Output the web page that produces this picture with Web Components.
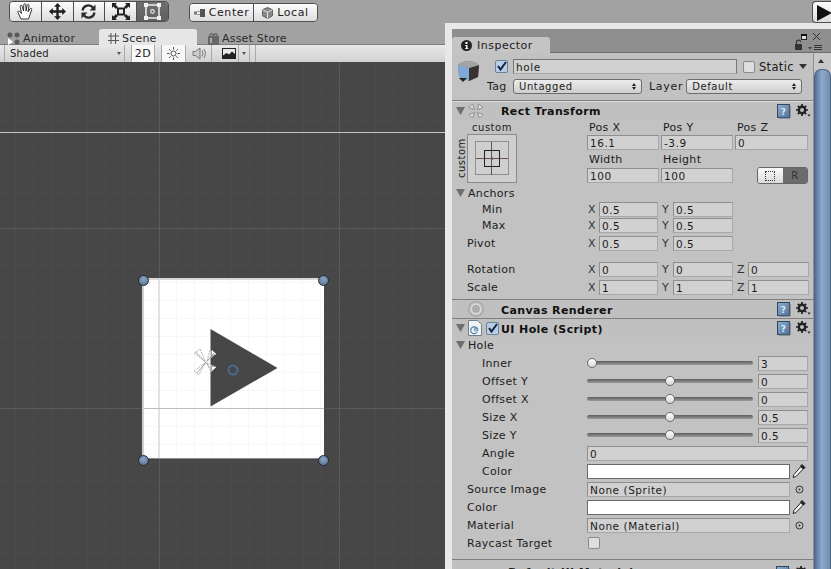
<!DOCTYPE html>
<html>
<head>
<meta charset="utf-8">
<title>Inspector</title>
<style>
html, body { margin: 0; height: 100%; overflow: hidden; background: #a2a2a2; }
body { font: 11px "DejaVu Sans", sans-serif; color: #1c1c1c; }
svg { display: block; }
</style>
</head>
<body>
<unity-editor></unity-editor>
<script>
// shared bits of css for the inspector fields
const fieldCss = `
    .field {
        box-sizing: border-box;
        height: 15px;
        background: #d1d1d1;
        border: 1px solid #8e8e8e;
        border-bottom-color: #a8a8a8;
        border-right-color: #a8a8a8;
        padding-left: 2px;
        font-size: 10.5px;
        line-height: 14px;
        letter-spacing: .55px;
        color: #1c1c1c;
        white-space: nowrap;
        overflow: hidden;
    }
    .label { letter-spacing: .32px; white-space: nowrap; }
`;

const icons = {
    help: `<svg width="14" height="15" viewBox="0 0 14 15"><defs><linearGradient id="hb" x1="0" y1="0" x2="1" y2="1"><stop offset="0" stop-color="#8fb0d0"/><stop offset="1" stop-color="#4f7199"/></linearGradient></defs><rect x=".5" y=".5" width="12" height="13" fill="url(#hb)" stroke="#2f4560"/><path d="M13 2v12H2" fill="none" stroke="#5a6a7c"/><text x="6.500" y="10.500" font-size="9" font-family="DejaVu Sans" text-anchor="middle" fill="#dfe9f3">?</text></svg>`,
    gear: `<svg width="15" height="14" viewBox="0 0 15 14"><circle cx="6" cy="6" r="3.200" fill="none" stroke="#222" stroke-width="2.400"/><path d="M6 0v2.500M6 9.500V12M0 6h2.500M9.500 6H12M1.800 1.800l1.800 1.800M8.400 8.400l1.800 1.800M10.200 1.800L8.400 3.600M3.600 8.400l-1.800 1.800" stroke="#222" stroke-width="1.700"/><path d="M11.500 10.500h3l-1.500 2.200z" fill="#222"/></svg>`,
    rect: `<svg width="16" height="16" viewBox="0 0 16 16" fill="#e4e4e4" stroke="#8f8f8f"><path d="M6.500 6.500L1 4.500 4.500 1zM9.500 6.500L11 1l4 3.500zM6.500 9.500L1 11.500 4.500 15zM9.500 9.500l5.500 2-3.500 3.500z"/></svg>`,
    canvas: `<svg width="16" height="16" viewBox="0 0 16 16" fill="none"><circle cx="8" cy="8" r="7.300" stroke="#9c9c9c"/><circle cx="8" cy="8" r="5" stroke="#d6d6d6" stroke-width="1.400"/><circle cx="8" cy="8" r="3" stroke="#9a9a9a"/><circle cx="8" cy="8" r="1.500" fill="#a4a4a4"/></svg>`,
    script: `<svg width="14" height="16" viewBox="0 0 14 16"><path d="M.5.5h9l4 4v11H.5z" fill="#f2f2f2" stroke="#6e7f90"/><path d="M9 8.500A3.400 3.400 0 1 0 9 12" fill="none" stroke="#4a7fb0" stroke-width="1.200"/><path d="M7 7.500v4M9.500 7.500v4M6 8.800h4.500M6 10.300h4.500" stroke="#4a7fb0" stroke-width=".7"/></svg>`,
    dropper: `<svg width="15" height="16" viewBox="0 0 15 16"><path d="M10 1.500l3 3-1.500 1.500-3-3z" fill="#222" stroke="#222"/><path d="M8.700 3.800l2.400 2.400-7.200 7.400-2.800.9.800-2.900z" fill="#f6f6f6" stroke="#222"/></svg>`,
    target: `<svg width="9" height="9" viewBox="0 0 9 9"><circle cx="4.500" cy="4.500" r="3.500" fill="none" stroke="#333"/><circle cx="4.500" cy="4.500" r="1" fill="#333"/></svg>`,
    fold: `<svg width="9" height="8" viewBox="0 0 9 8"><path d="M0 0h9L4.500 8z" fill="#6e6e6e"/></svg>`,
    check: `<svg width="11" height="11" viewBox="0 0 11 11"><path d="M2 5l2.500 3.500L10 1" fill="none" stroke="#10243c" stroke-width="2"/></svg>`
};

// buttons in the main toolbar
class ToolButton extends HTMLElement {
    constructor() {
        super();
        this.attachShadow({ mode: 'open' });
    }
    connectedCallback() {
        this.shadowRoot.innerHTML = `
            <style>
                :host {
                    display: flex; align-items: center; justify-content: center; gap: 4px;
                    box-sizing: border-box;
                    height: 100%;
                    flex: 1;
                    background: linear-gradient(#fdfdfd, #dcdcdc);
                    border-right: 1px solid #4f4f4f;
                    font-size: 11px;
                    letter-spacing: .6px;
                    color: #222;
                }
                :host(:last-child) { border-right: 0; }
                :host([active]) { background: linear-gradient(#6f6f6f, #5f5f5f); }
            </style>
            <slot></slot>
        `;
    }
}
customElements.define('tool-button', ToolButton);

class MainToolbar extends HTMLElement {
    constructor() {
        super();
        this.attachShadow({ mode: 'open' });
    }
    connectedCallback() {
        this.shadowRoot.innerHTML = `
            <style>
                :host {
                    grid-column: 1 / 3;
                    display: flex;
                    height: 23px;
                    padding-left: 9px;
                    background: #a2a2a2;
                }
                .group {
                    display: flex;
                    box-sizing: border-box;
                    border: 1px solid #4f4f4f;
                    border-radius: 4px;
                    overflow: hidden;
                }
                .tools { width: 160px; height: 21px; margin-top: 1px; }
                .pivot { width: 129px; height: 19px; margin: 3px 0 0 20px; }
                .play {
                    margin: 1px 0 0 auto;
                    width: 19px; height: 22px;
                    box-sizing: border-box;
                    border: 1px solid #4f4f4f; border-right: 0;
                    border-radius: 4px 0 0 4px;
                    background: linear-gradient(#fdfdfd, #dcdcdc);
                    padding: 3px 0 0 4px;
                }
            </style>
            <div class="group tools">
                <tool-button><svg width="16" height="17" viewBox="0 0 16 17"><path d="M4 16L1 9.500c-.5-1.300 1-2 1.800-1L4.500 10.500 3.200 3.500c-.2-1.400 1.700-1.700 2-.3L6.500 8 6.800 1.700c.1-1.300 1.900-1.300 2 0L9 8l1.200-5.700c.3-1.300 2-1 1.800.3L11 8.800l2-3c.8-1 2.200-.2 1.700 1L12.500 13l-1 3z" fill="#fff" stroke="#222" stroke-width=".9"/></svg></tool-button>
                <tool-button><svg width="17" height="17" viewBox="0 0 17 17"><path d="M8.500 0L12 3.800H9.700v3.500h3.500V5L17 8.500 13.200 12V9.700H9.700v3.500H12L8.500 17 5 13.200h2.300V9.700H3.800V12L0 8.500 3.800 5v2.300h3.500V3.800H5z" fill="#1e1e1e"/></svg></tool-button>
                <tool-button><svg width="15" height="15" viewBox="0 0 15 15" fill="none" stroke="#2a2a2a" stroke-width="2.200"><path d="M1.500 6.500A6 6 0 0 1 12 3.500"/><path d="M13.500 8.500A6 6 0 0 1 3 11.500"/><path d="M14.500 .5v6h-6z" fill="#2a2a2a" stroke="none"/><path d="M.5 14.500v-6h6z" fill="#2a2a2a" stroke="none"/></svg></tool-button>
                <tool-button><svg width="18" height="17" viewBox="0 0 18 17"><rect x="6" y="5.500" width="6" height="6" fill="none" stroke="#222" stroke-width="2"/><path d="M0 0h5L3.500 1.500 6 4 4 6 1.500 3.500 0 5zM18 0h-5l1.500 1.500L12 4l2 2 2.500-2.500L18 5zM0 17h5l-1.500-1.500L6 13l-2-2-2.500 2.500L0 12zM18 17h-5l1.500-1.500L12 13l2-2 2.500 2.500L18 12z" fill="#222"/></svg></tool-button>
                <tool-button active><svg width="17" height="17" viewBox="0 0 17 17"><rect x="2" y="2" width="13" height="13" fill="none" stroke="#e8e8e8" stroke-width="1.600"/><path d="M0 0h4v4H0zM13 0h4v4h-4zM0 13h4v4H0zM13 13h4v4h-4z" fill="#f2f2f2"/><circle cx="8.500" cy="8.500" r="1.800" fill="none" stroke="#e8e8e8" stroke-width="1.200"/></svg></tool-button>
            </div>
            <div class="group pivot">
                <tool-button><svg width="11" height="8" viewBox="0 0 11 8"><path d="M0 2.500h3v3H0z" fill="#777"/><path d="M3 2.500h3M3 5.500h3" stroke="#999"/><path d="M6 0h5v8H6z" fill="#555"/></svg>Center</tool-button>
                <tool-button><svg width="11" height="12" viewBox="0 0 12 12"><path d="M6 0l5.500 2.500v6.500L6 12 .5 9V2.500z" fill="#888" stroke="#555"/><path d="M.5 2.500L6 5.200l5.500-2.700M6 5.200V12" stroke="#eee" fill="none"/></svg>Local</tool-button>
            </div>
            <div class="play"><svg width="15" height="16" viewBox="0 0 15 16"><path d="M0 0l15 8-15 8z" fill="#111"/></svg></div>
        `;
    }
}
customElements.define('main-toolbar', MainToolbar);

class SceneTabs extends HTMLElement {
    constructor() {
        super();
        this.attachShadow({ mode: 'open' });
    }
    connectedCallback() {
        this.shadowRoot.innerHTML = `
            <style>
                :host {
                    display: flex;
                    height: 22px;
                    box-sizing: border-box;
                    padding-top: 6px;
                    padding-left: 7px;
                    background: #a2a2a2;
                    border-bottom: 1px solid #7c7c7c;
                    letter-spacing: .2px;
                    color: #2a2a2a;
                }
                .tab { display: flex; align-items: center; gap: 3px; padding-top: 3px; box-sizing: border-box; height: 16px; }
                .animator { width: 92px; }
                .scene {
                    width: 98px;
                    padding-left: 9px;
                    background: #e6e6e6;
                    border-radius: 3px 3px 0 0;
                }
                .store { margin-left: 11px; }
            </style>
            <div class="tab animator"><svg width="13" height="13" viewBox="0 0 13 13"><circle cx="3" cy="3" r="2.500" fill="#5a5a5a"/><circle cx="10" cy="3" r="2.500" fill="#5a5a5a"/><circle cx="10" cy="10" r="2.500" fill="#5a5a5a"/><path d="M1 6l5 4-5 3z" fill="#fff"/></svg>Animator</div>
            <div class="tab scene"><svg width="11" height="11" viewBox="0 0 11 11"><path d="M3 0v11M7.500 0v11M0 3h11M0 7.500h11" stroke="#555"/></svg>Scene</div>
            <div class="tab store"><svg width="11" height="12" viewBox="0 0 11 12"><path d="M0 3h11v9H0z" fill="#666"/><path d="M2 3V1h3v2M6 3V1h3v2" fill="none" stroke="#555"/><path d="M2 5h2v5H2z" fill="#aaa"/></svg>Asset Store</div>
        `;
    }
}
customElements.define('scene-tabs', SceneTabs);

class SceneToolbar extends HTMLElement {
    constructor() {
        super();
        this.attachShadow({ mode: 'open' });
    }
    connectedCallback() {
        this.shadowRoot.innerHTML = `
            <style>
                :host {
                    display: flex;
                    align-items: stretch;
                    height: 17px;
                    background: linear-gradient(#e8e8e8, #d2d2d2);
                    font-size: 10px;
                    letter-spacing: .2px;
                    color: #222;
                }
                .edge { width: 4px; border-right: 1px solid #aaa; }
                .shaded {
                    display: flex; align-items: center; justify-content: space-between;
                    box-sizing: border-box;
                    width: 120px;
                    padding: 0 3px 0 5px;
                    border-right: 1px solid #aaa;
                }
                .arrow { width: 0; height: 0; border: 2.500px solid transparent; border-top: 3px solid #555; border-bottom: 0; }
                .btn { display: flex; align-items: center; justify-content: center; box-sizing: border-box; border-right: 1px solid #aaa; }
                .two { width: 24px; margin-left: 6px; background: #f8f8f8; border-left: 1px solid #aaa; font-size: 11px; letter-spacing: .5px; }
                .sun { width: 25px; margin-left: 6px; background: #f8f8f8; border-left: 1px solid #aaa; }
                .sound { width: 26px; }
                .image { margin-left: 8px; width: 18px; border: 0; }
                .more { width: 12px; border-left: 1px solid #aaa; }
            </style>
            <div class="edge"></div>
            <div class="shaded">Shaded<span class="arrow"></span></div>
            <div class="btn two">2D</div>
            <div class="btn sun"><svg width="13" height="13" viewBox="0 0 13 13" stroke="#555" fill="none"><circle cx="6.500" cy="6.500" r="2.500"/><path d="M6.500 0v2.500M6.500 10.500V13M0 6.500h2.500M10.500 6.500H13M2 2l1.700 1.700M9.300 9.300L11 11M11 2L9.300 3.700M3.700 9.300L2 11"/></svg></div>
            <div class="btn sound"><svg width="14" height="13" viewBox="0 0 14 13" fill="none" stroke="#777"><path d="M1 4.500h2.500L8 1v11L3.500 8.500H1z" fill="#ccc"/><path d="M10 3.500c1.200 2 1.200 4 0 6M12 2c1.800 3 1.800 6 0 9"/></svg></div>
            <div class="btn image"><svg width="14" height="11" viewBox="0 0 14 11"><rect width="14" height="11" fill="#222"/><path d="M1 1h12v5L10 3.500 7 6.500 4.500 5 1 7.500z" fill="#e8e8e8"/></svg></div>
            <div class="btn more"><span class="arrow"></span></div>
            <div class="btn" style="width:1px;margin-left:5px"></div>
        `;
    }
}
customElements.define('scene-toolbar', SceneToolbar);

// the scene is a free canvas, so its content is placed by coordinates
class SceneCanvas extends HTMLElement {
    constructor() {
        super();
        this.attachShadow({ mode: 'open' });
    }
    connectedCallback() {
        const handles = [[143, 218], [323, 218], [143, 398], [323, 398]]
            .map(([x, y]) => `<i class="handle" style="left:${x - 5}px;top:${y - 5}px"></i>`).join('');
        this.shadowRoot.innerHTML = `
            <style>
                :host {
                    display: block;
                    position: relative;
                    flex: 1;
                    overflow: hidden;
                    background-color: #474747;
                    background-image:
                        linear-gradient(90deg, #5a5a5a 1px, transparent 1px),
                        linear-gradient(#5a5a5a 1px, transparent 1px),
                        linear-gradient(90deg, #4b4b4b 1px, transparent 1px),
                        linear-gradient(#4b4b4b 1px, transparent 1px);
                    background-size: 180px 180px, 180px 180px, 18px 18px, 18px 18px;
                    background-position: 159px 0, 0 166px, 15px 0, 0 4px;
                }
                .line { position: absolute; left: 0; right: 0; top: 70px; height: 1px; background: #c4c4c4; }
                .image {
                    position: absolute; left: 142px; top: 216px;
                    width: 182px; height: 181px;
                    box-sizing: border-box;
                    border-top: 2px solid #d8d8d8;
                    border-left: 2px solid #cfcfcf;
                    border-bottom: 1px solid #8a8a8a;
                    background-color: #fff;
                    background-image:
                        linear-gradient(#bcbcbc 1px, transparent 1px),
                        linear-gradient(90deg, #e2e2e2 2px, transparent 2px),
                        linear-gradient(90deg, #f7f7f7 1px, transparent 1px),
                        linear-gradient(#f7f7f7 1px, transparent 1px);
                    background-size: 100% 180px, 180px 100%, 18px 18px, 18px 18px;
                    background-position: 0 128px, 14px 0, 14px 0, 0 2px;
                }
                svg { position: absolute; left: 0; top: 0; }
                .handle {
                    position: absolute;
                    box-sizing: border-box;
                    width: 11px; height: 11px;
                    border-radius: 50%;
                    border: 1px solid #252b33;
                    background: radial-gradient(circle at 50% 35%, #8ea6c4, #4d6a8f);
                }
            </style>
            <div class="line"></div>
            <div class="image"></div>
            <svg width="445" height="507" viewBox="0 0 445 507">
                <path d="M210.500 267L277.500 306 210.500 344.500z" fill="#474747"/>
                <circle cx="233" cy="308" r="4.500" fill="none" stroke="#4c6a92" stroke-width="2"/>
                <g fill="#fff" fill-opacity=".5" stroke="#b0b0b0" stroke-dasharray="2 1">
                    <path d="M205 299L194 291l6-4z"/>
                    <path d="M207 299l3-11 6 4z"/>
                    <path d="M205 301L194 309l5 4z"/>
                    <path d="M207 301l9 4-5 5z"/>
                </g>
                <path d="M212 288l4 4-4 1zM212 305l4 0-4 4z" fill="#fff"/>
                <path d="M196 290L213 309M214 291L197 311" stroke="#999" stroke-width=".8"/>
            </svg>
            ${handles}
        `;
    }
}
customElements.define('scene-canvas', SceneCanvas);

class NumField extends HTMLElement {
    constructor() {
        super();
        this.attachShadow({ mode: 'open' });
    }
    connectedCallback() {
        this.shadowRoot.innerHTML = `
            <style>
                :host { display: block; flex: 1; min-width: 0; }
                ${fieldCss}
            </style>
            <div class="field">${this.getAttribute('value') || ''}</div>
        `;
    }
}
customElements.define('num-field', NumField);

class GameObjectHeader extends HTMLElement {
    constructor() {
        super();
        this.attachShadow({ mode: 'open' });
    }
    connectedCallback() {
        this.shadowRoot.innerHTML = `
            <style>
                :host {
                    display: block;
                    box-sizing: border-box;
                    height: 48px;
                    position: relative;
                    background: #c2c2c2;
                    border-bottom: 1px solid #7f7f7f;
                    padding: 6px 0 0 61px;
                }
                ${fieldCss}
                .row { display: flex; align-items: center; height: 15px; }
                .row + .row { margin-top: 5px; }
                .cube { position: absolute; left: 5px; top: 7px; }
                .check {
                    box-sizing: border-box;
                    width: 13px; height: 13px;
                    margin-left: -18px; margin-right: 5px;
                    border: 1px solid #69829c; border-radius: 2px;
                    background: #b9cee4;
                }
                .check.off { width: 12px; height: 12px; margin: 0 4px 0 6px; background: #dedede; border-color: #8a8a8a; }
                .name { width: 224px; height: 15px; border: 1px solid #777; border-bottom-color: #a8a8a8; }
                .popup {
                    display: flex; align-items: center; justify-content: space-between;
                    box-sizing: border-box;
                    height: 15px;
                    padding: 0 5px;
                    border: 1px solid #6e6e6e; border-radius: 3px;
                    background: linear-gradient(#ededed, #cfcfcf);
                    font-size: 10px;
                    letter-spacing: .6px;
                }
                .updown { display: flex; flex-direction: column; gap: 1px; }
                .updown i { width: 0; height: 0; border: 2px solid transparent; }
                .updown i:first-child { border-bottom: 3px solid #222; border-top: 0; }
                .updown i:last-child { border-top: 3px solid #222; border-bottom: 0; }
                .menu { width: 0; height: 0; margin-left: 5px; border: 4px solid transparent; border-top: 5px solid #333; border-bottom: 0; }
                .tag { margin-left: -26px; width: 26px; }
            </style>
            <svg class="cube" width="23" height="23" viewBox="0 0 23 23">
                <path d="M1 5C4 2 8 1 11 1s8 1 11 4l-1 12-9 4-10-4z" fill="#777"/>
                <path d="M1 5l11 3v13L2 17z" fill="#7fa9d6"/>
                <path d="M12 8l10-3-1 12-9 4z" fill="#3a3230"/>
                <path d="M1 5C4 2 8 1 11 1s8 1 11 4L12 8z" fill="#a4a4a4"/>
                <path d="M2 18h8l-4 4z" fill="#222"/>
            </svg>
            <div class="row">
                <span class="check">${icons.check}</span>
                <div class="field name">hole</div>
                <span class="check off"></span>
                <span class="label" style="font-size:11.500px">Static</span>
                <span class="menu"></span>
            </div>
            <div class="row">
                <span class="label tag">Tag</span>
                <div class="popup" style="width:129px">Untagged<span class="updown"><i></i><i></i></span></div>
                <span class="label" style="margin:0 3px 0 7px;letter-spacing:.7px">Layer</span>
                <div class="popup" style="width:116px">Default<span class="updown"><i></i><i></i></span></div>
            </div>
        `;
    }
}
customElements.define('game-object-header', GameObjectHeader);

class CompHeader extends HTMLElement {
    constructor() {
        super();
        this.attachShadow({ mode: 'open' });
    }
    connectedCallback() {
        const icon = this.getAttribute('icon');
        const fold = this.hasAttribute('fold');
        const check = this.hasAttribute('check');
        this.shadowRoot.innerHTML = `
            <style>
                :host {
                    display: flex; align-items: center;
                    box-sizing: border-box;
                    height: 19px;
                    padding-left: 4px;
                    background: #c0c0c0;
                    border-top: 1px solid #dadada;
                    font-weight: bold;
                    letter-spacing: .4px;
                    color: #111;
                }
                :host([top]) { border-top-color: #7f7f7f; }
                .fold { width: 11px; }
                .icon { width: 18px; display: flex; justify-content: flex-start; padding-left: 1px; box-sizing: border-box; }
                .check { width: 16px; }
                .box {
                    display: block; box-sizing: border-box;
                    width: 13px; height: 13px; margin-left: 1px;
                    border: 1px solid #69829c; border-radius: 2px; background: #b9cee4;
                }
                .title { margin-left: ${check ? '0' : '16px'}; }
                :host([top]) .title { padding-top: 2px; }
                .right { margin-left: auto; display: flex; gap: 5px; padding-right: 2px; }
            </style>
            <div class="fold">${fold ? icons.fold : ''}</div>
            <div class="icon">${icons[icon]}</div>
            ${check ? `<div class="check"><span class="box">${icons.check}</span></div>` : ''}
            <span class="title">${this.getAttribute('title')}</span>
            <div class="right">${icons.help}${icons.gear}</div>
        `;
    }
}
customElements.define('comp-header', CompHeader);

// label + X/Y/Z values, on the 135px label column
class VecRow extends HTMLElement {
    constructor() {
        super();
        this.attachShadow({ mode: 'open' });
    }
    connectedCallback() {
        const cells = ['x', 'y', 'z'].map(a => {
            const v = this.getAttribute(a);
            return v === null ? '<div></div>'
                : `<div class="cell ${a}"><span class="axis">${a.toUpperCase()}</span><num-field value="${v}"></num-field></div>`;
        }).join('');
        this.shadowRoot.innerHTML = `
            <style>
                :host {
                    display: flex; align-items: center;
                    height: 16px;
                    padding-left: 15px;
                }
                :host([indent]) { padding-left: 30px; }
                ${fieldCss}
                .name { width: 120px; flex: none; }
                :host([indent]) .name { width: 105px; }
                .vals { display: grid; grid-template-columns: 71px 72px 73px; gap: 3px; }
                .cell { display: flex; align-items: center; }
                .axis { width: 12px; color: #333; letter-spacing: 0; padding-left: 1px; box-sizing: border-box; }
                .y .axis, .z .axis { width: 12px; }
            </style>
            <span class="label name">${this.getAttribute('label') || ''}</span>
            <div class="vals">${cells}</div>
        `;
    }
}
customElements.define('vec-row', VecRow);

class RectBlock extends HTMLElement {
    constructor() {
        super();
        this.attachShadow({ mode: 'open' });
    }
    connectedCallback() {
        this.shadowRoot.innerHTML = `
            <style>
                :host { display: block; height: 179px; background: #c2c2c2; }
                ${fieldCss}
                .top { display: flex; height: 63px; padding-left: 8px; }
                .side { width: 127px; flex: none; display: grid; grid-template-columns: 7px 50px; grid-template-rows: 14px 49px; }
                .h { grid-column: 2; text-align: center; font-size: 10px; letter-spacing: .5px; line-height: 15px; }
                .v { writing-mode: vertical-rl; transform: rotate(180deg); font-size: 10px; letter-spacing: .5px; text-align: center; line-height: 7px; margin-left: -2px; }
                .widget { box-sizing: border-box; border: 1px solid #8a8a8a; background: #cfcfcf; }
                .vals { display: grid; grid-template-columns: 72px 72px 73px; column-gap: 2px; grid-template-rows: 15px 15px 18px 15px; align-content: start; }
                .vals span { padding-left: 2px; line-height: 15px; }
                .rbtn { grid-column: 3; display: flex; width: 51px; height: 17px; margin: -1px 0 0 22px; border: 1px solid #666; border-radius: 3px; overflow: hidden; box-sizing: border-box; }
                .rbtn div { flex: 1; display: flex; align-items: center; justify-content: center; }
                .rbtn .a { background: linear-gradient(#fafafa, #dadada); }
                .rbtn .b { background: #6c6c6c; color: #333; font-size: 10px; }
                .rbtn .a i { width: 8px; height: 8px; border: 1px dotted #333; }
                .anchors { display: flex; align-items: center; gap: 3px; height: 16px; margin-top: 2px; padding-left: 4px; }
                .spacer { height: 2px; }
                .gap { height: 10px; }
            </style>
            <div class="top">
                <div class="side">
                    <div class="h">custom</div>
                    <div class="v">custom</div>
                    <div class="widget">
                        <svg width="48" height="47" viewBox="0 0 48 47" fill="none">
                            <rect x="7.500" y="6.500" width="33" height="33" stroke="#8f8f8f"/>
                            <path d="M23.500 7v33M8 23.500h32" stroke="#6a4f4f"/>
                            <rect x="16.500" y="15.500" width="15" height="16" stroke="#222"/>
                            <circle cx="24" cy="23.500" r="1.500" fill="#666"/>
                        </svg>
                    </div>
                </div>
                <div class="vals">
                    <span class="label">Pos X</span><span class="label">Pos Y</span><span class="label">Pos Z</span>
                    <num-field value="16.1"></num-field><num-field value="-3.9"></num-field><num-field value="0"></num-field>
                    <span class="label" style="line-height:19px">Width</span><span class="label" style="line-height:19px">Height</span><span></span>
                    <num-field value="100"></num-field><num-field value="100"></num-field>
                    <div class="rbtn"><div class="a"><i></i></div><div class="b">R</div></div>
                </div>
            </div>
            <div class="anchors">${icons.fold}<span class="label">Anchors</span></div>
            <vec-row indent label="Min" x="0.5" y="0.5"></vec-row>
            <vec-row indent label="Max" x="0.5" y="0.5"></vec-row>
            <div class="spacer"></div>
            <vec-row label="Pivot" x="0.5" y="0.5"></vec-row>
            <div class="gap"></div>
            <vec-row label="Rotation" x="0" y="0" z="0"></vec-row>
            <div class="spacer"></div>
            <vec-row label="Scale" x="1" y="1" z="1"></vec-row>
        `;
    }
}
customElements.define('rect-block', RectBlock);

class SliderRow extends HTMLElement {
    constructor() {
        super();
        this.attachShadow({ mode: 'open' });
    }
    connectedCallback() {
        this.shadowRoot.innerHTML = `
            <style>
                :host { display: flex; align-items: center; height: 18px; padding-left: 30px; }
                ${fieldCss}
                .name { width: 105px; flex: none; }
                .track {
                    position: relative;
                    width: 166px; height: 4px; flex: none;
                    border-radius: 2px;
                    background: linear-gradient(#5c5c5c, #9a9a9a);
                }
                .thumb {
                    position: absolute; top: -3px;
                    box-sizing: border-box;
                    width: 10px; height: 10px;
                    border-radius: 50%;
                    border: 1px solid #6a6a6a;
                    background: linear-gradient(#fff, #d8d8d8);
                    left: ${this.getAttribute('pos')}px;
                }
                num-field { margin-left: 5px; width: 50px; flex: none; }
            </style>
            <span class="label name">${this.getAttribute('label')}</span>
            <div class="track"><div class="thumb"></div></div>
            <num-field value="${this.getAttribute('value')}"></num-field>
        `;
    }
}
customElements.define('slider-row', SliderRow);

class FieldRow extends HTMLElement {
    constructor() {
        super();
        this.attachShadow({ mode: 'open' });
    }
    connectedCallback() {
        const kind = this.getAttribute('kind');
        const value = this.getAttribute('value') || '';
        let body = `<div class="field wide">${value}</div>`;
        if (kind === 'color') body = `<div class="field main white"></div><div class="end">${icons.dropper}</div>`;
        if (kind === 'object') body = `<div class="field main">${value}</div><div class="end">${icons.target}</div>`;
        if (kind === 'check') body = `<span class="box"></span>`;
        this.shadowRoot.innerHTML = `
            <style>
                :host { display: flex; align-items: center; height: 18px; padding-left: 15px; }
                :host([indent]) { padding-left: 30px; }
                ${fieldCss}
                .name { width: 120px; flex: none; }
                :host([indent]) .name { width: 105px; }
                .wide { width: 221px; }
                .main { width: 203px; }
                .white { background: #fff; border: 1px solid #6a6a6a; }
                .end { width: 18px; display: flex; justify-content: center; }
                .box { margin-left: 1px; box-sizing: border-box; width: 12px; height: 12px; border: 1px solid #8a8a8a; border-radius: 2px; background: #dedede; }
            </style>
            <span class="label name">${this.getAttribute('label')}</span>
            ${body}
        `;
    }
}
customElements.define('field-row', FieldRow);

class HoleBlock extends HTMLElement {
    constructor() {
        super();
        this.attachShadow({ mode: 'open' });
    }
    connectedCallback() {
        this.shadowRoot.innerHTML = `
            <style>
                :host { display: block; background: #c2c2c2; }
                ${fieldCss}
                .fold { display: flex; align-items: center; gap: 3px; height: 16px; padding-left: 4px; margin-bottom: 1px; }
            </style>
            <div class="fold">${icons.fold}<span class="label">Hole</span></div>
            <slider-row label="Inner" pos="0" value="3"></slider-row>
            <slider-row label="Offset Y" pos="78" value="0"></slider-row>
            <slider-row label="Offset X" pos="78" value="0"></slider-row>
            <slider-row label="Size X" pos="78" value="0.5"></slider-row>
            <slider-row label="Size Y" pos="78" value="0.5"></slider-row>
            <field-row indent label="Angle" value="0"></field-row>
            <field-row indent label="Color" kind="color"></field-row>
            <field-row label="Source Image" kind="object" value="None (Sprite)"></field-row>
            <field-row label="Color" kind="color"></field-row>
            <field-row label="Material" kind="object" value="None (Material)"></field-row>
            <field-row label="Raycast Target" kind="check"></field-row>
        `;
    }
}
customElements.define('hole-block', HoleBlock);

class InspectorPanel extends HTMLElement {
    constructor() {
        super();
        this.attachShadow({ mode: 'open' });
    }
    connectedCallback() {
        const footHelp = icons.help.replace(/<text.*<\/text>/, '');
        this.shadowRoot.innerHTML = `
            <style>
                :host {
                    display: flex;
                    flex-direction: column;
                    box-sizing: border-box;
                    padding: 6px 0 0 7px;
                    background: #e8e8e8;
                    overflow: hidden;
                }
                .head { position: relative; display: flex; align-items: flex-end; height: 23px; background: #8f8f8f; border-bottom: 1px solid #6e6e6e; flex: none; }
                .tab {
                    display: flex; align-items: center; gap: 5px;
                    box-sizing: border-box;
                    width: 98px; height: 16px;
                    margin-bottom: -1px;
                    padding-left: 9px;
                    background: #c4c4c4;
                    border-radius: 3px 3px 0 0;
                    letter-spacing: .5px;
                }
                .ctl { position: absolute; top: 0; right: 0; }
                .wrap { display: flex; flex: 1; min-height: 0; }
                .body { width: 361px; flex: none; background: #c2c2c2; }
                .foot { display: flex; height: 18px; box-sizing: border-box; padding: 6px 3px 0 56px; border-top: 1px solid #7f7f7f; margin-top: 7px; background: #c0c0c0; font-weight: bold; letter-spacing: .4px; }
                .foot .right { margin-left: auto; display: flex; gap: 5px; }
                .scroll { flex: 1; display: flex; flex-direction: column; background: #c8c8c8; border-left: 1px solid #8f8f8f; }
                .up { height: 16px; display: flex; align-items: center; justify-content: center; flex: none; }
                .up i { width: 0; height: 0; border: 3px solid transparent; border-bottom: 4px solid #333; border-top: 0; margin-left: -3px; }
                .thumb { flex: 1; border-radius: 7px 7px 0 0; background: linear-gradient(90deg, #4f6f98, #8eaacb 45%, #6d8cb2); border: 1px solid #51657e; border-bottom: 0; }
            </style>
            <div class="head">
                <div class="tab"><svg width="11" height="11" viewBox="0 0 11 11"><circle cx="5.500" cy="5.500" r="5.500" fill="#222"/><path d="M4.500 2h2v2h-2zM4 5h2.500v3.200h1V9h-3.500v-.8h1V5.800H4z" fill="#fff"/></svg>Inspector</div>
                <svg class="ctl" width="40" height="23" viewBox="0 0 40 23">
                    <rect x="10.500" y="5.500" width="5" height="5" fill="#ddd" stroke="#222"/>
                    <path d="M10 6h6" stroke="#111" stroke-width="2"/>
                    <path d="M22 4l7 7M29 4l-7 7" stroke="#333"/>
                    <rect x="4" y="15" width="7" height="6" fill="#333"/>
                    <path d="M5.500 15v-1.800a2 2 0 0 1 4 0" fill="none" stroke="#333" stroke-width="1.200"/>
                    <path d="M17 18h4l-2 2.500z" fill="#444"/>
                    <path d="M23 16.500h8M23 18.500h8M23 20.500h8" stroke="#333"/>
                </svg>
            </div>
            <div class="wrap">
                <div class="body">
                    <game-object-header></game-object-header>
                    <comp-header fold icon="rect" title="Rect Transform"></comp-header>
                    <rect-block></rect-block>
                    <comp-header top icon="canvas" title="Canvas Renderer"></comp-header>
                    <comp-header top fold check icon="script" title="UI Hole (Script)"></comp-header>
                    <hole-block></hole-block>
                    <div class="foot">Default UI Material<div class="right">${footHelp}${icons.gear}</div></div>
                </div>
                <div class="scroll">
                    <div class="up"><i></i></div>
                    <div class="thumb"></div>
                </div>
            </div>
        `;
    }
}
customElements.define('inspector-panel', InspectorPanel);

class UnityEditor extends HTMLElement {
    constructor() {
        super();
        this.attachShadow({ mode: 'open' });
    }
    connectedCallback() {
        this.shadowRoot.innerHTML = `
            <style>
                :host {
                    display: grid;
                    grid-template-columns: 445px 386px;
                    grid-template-rows: 23px 546px;
                    width: 831px;
                    height: 569px;
                    overflow: hidden;
                }
                .left { display: flex; flex-direction: column; min-height: 0; }
            </style>
            <main-toolbar></main-toolbar>
            <div class="left">
                <scene-tabs></scene-tabs>
                <scene-toolbar></scene-toolbar>
                <scene-canvas></scene-canvas>
            </div>
            <inspector-panel></inspector-panel>
        `;
    }
}
customElements.define('unity-editor', UnityEditor);
</script>
</body>
</html>
